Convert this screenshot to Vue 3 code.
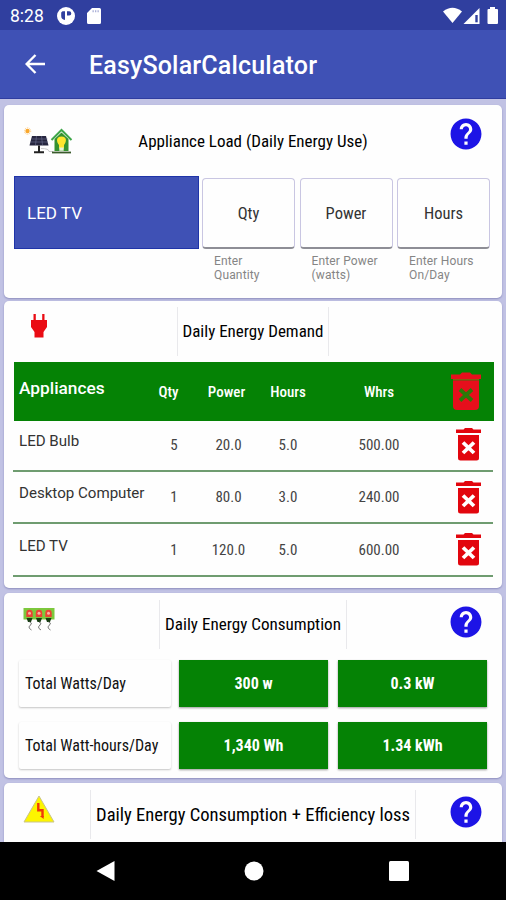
<script setup>
import { ref } from 'vue'

const fields = ref([
  { id: 'qty', label: 'Qty', hint: 'Enter Quantity' },
  { id: 'power', label: 'Power', hint: 'Enter Power (watts)' },
  { id: 'hours', label: 'Hours', hint: 'Enter Hours On/Day' }
])

const appliances = ref([
  { id: 1, name: 'LED Bulb', qty: 5, power: 20, hours: 5 },
  { id: 2, name: 'Desktop Computer', qty: 1, power: 80, hours: 3 },
  { id: 3, name: 'LED TV', qty: 1, power: 120, hours: 5 }
])

const totals = ref([
  { label: 'Total Watts/Day', small: '300 w', big: '0.3 kW' },
  { label: 'Total Watt-hours/Day', small: '1,340 Wh', big: '1.34 kWh' }
])

const removeAppliance = (id) => {
  appliances.value = appliances.value.filter((a) => a.id !== id)
}
</script>

<template>
  <div class="phone">
    <div class="status">
      <span class="clock">8:28</span>
      <svg class="st-p" width="18" height="18" viewBox="0 0 18 18">
        <circle cx="9" cy="9" r="9" fill="#fff" />
        <path d="M5.500 4.300h2.500v8.600A4 4 0 0 1 4.200 9V5.500z M10 4.300h2.200a2 2 0 0 1 0 4.200H10z" fill="#303f9f" />
      </svg>
      <svg class="st-sd" width="14" height="16" viewBox="0 0 14 16">
        <path d="M5 0h7.500A1.500 1.500 0 0 1 14 1.500v13a1.500 1.500 0 0 1-1.500 1.500h-11A1.500 1.500 0 0 1 0 14.500V5z" fill="#fff" />
        <path d="M5.500 2.300h1.300v2H5.500zM8 2.300h1.300v2H8zM10.500 2.300h1.300v2h-1.300z" fill="#aab0d8" />
      </svg>
      <svg class="st-right" width="56" height="18" viewBox="0 0 56 18">
        <path d="M0 4.500Q9.500-3 19 4.500L9.500 16z" fill="#fff" />
        <path d="M36.500 1v16H20.500z" fill="#fff" />
        <path d="M32.300 8h2.400v7.300h-2.400z" fill="#303f9f" />
        <path d="M47 0h5v2h2a1 1 0 0 1 1 1v13a1 1 0 0 1-1 1h-8.500a1 1 0 0 1-1-1V3a1 1 0 0 1 1-1H47z" fill="#fff" />
      </svg>
    </div>

    <header>
      <svg width="20" height="20" viewBox="0 0 20 20" fill="none" stroke="#fff" stroke-width="2.400">
        <path d="M20 10H2M10.500 1L1.600 10l8.900 9" />
      </svg>
      <h1>EasySolarCalculator</h1>
    </header>

    <main>
      <section class="card load">
        <div class="card-head">
          <svg class="icon-solar" width="50" height="28" viewBox="0 0 50 28">
            <circle cx="3.500" cy="4" r="2.200" fill="#f9a72b" />
            <circle cx="3.500" cy="4" r="3.200" fill="none" stroke="#fbc77a" stroke-width="1" stroke-dasharray="1 1" />
            <path d="M8 9h14l2.500 9.500H5.500z" fill="#26263f" />
            <path d="M7.500 12h16M6.700 15h17M12.500 9l-1 9M17.500 9l1 9" stroke="#6c6e92" stroke-width=".6" />
            <path d="M15 18.500V25M10 25.200h10" stroke="#222" stroke-width="2" />
            <path d="M17 21.500q8 0 8 3h4" fill="none" stroke="#bbb" stroke-width=".8" />
            <path d="M30.500 12L37.500 5.500 44.500 12V24h-14z" fill="#35922f" />
            <path d="M27.500 13L37.500 3l10 10" fill="none" stroke="#3da648" stroke-width="2" />
            <path d="M28 25.500h19" stroke="#3a5a2c" stroke-width="1.800" />
            <path d="M37.500 9.500c6 0 5 5.500 2.500 8.500v3.500h-5V18c-2.500-3-3.500-8.500 2.500-8.500z" fill="#ffe52e" />
            <path d="M35.300 20.500h4.400v3.300h-4.400z" fill="#e8f2d8" />
          </svg>
          <h2>Appliance Load (Daily Energy Use)</h2>
          <svg class="help" width="32" height="32" viewBox="0 0 24 24">
            <path fill="#1d14e6" d="M12 .4C5.600.4.400 5.600.400 12S5.600 23.600 12 23.600 23.600 18.400 23.600 12 18.400.400 12 .400zm1.200 19.700h-2.400v-2.400h2.400zm2.400-9l-1.100 1.100c-.9.900-1.300 1.600-1.300 3.300h-2.400v-.6c0-1.300.500-2.400 1.400-3.300l1.400-1.500c.5-.4.700-1 .7-1.600 0-1.300-1-2.300-2.300-2.300s-2.400 1-2.400 2.300H7.300c0-2.600 2.100-4.700 4.700-4.700s4.700 2.100 4.700 4.700c0 1-.4 2-1.100 2.600z" />
          </svg>
        </div>
        <div class="inputs">
          <div class="select">LED TV</div>
          <div v-for="f in fields" :key="f.id" class="field">
            <div class="box">{{ f.label }}</div>
            <p>{{ f.hint }}</p>
          </div>
        </div>
      </section>

      <section class="card demand">
        <div class="card-head">
          <svg class="icon-plug" width="16" height="24" viewBox="0 0 16 24">
            <path d="M2.500 0h2.300v6h6.400V0h2.300v6H16v7l-3.500 5v5.500h-9V18L0 13V6h2.500z" fill="#ea0c14" />
          </svg>
          <h2 class="boxed">Daily Energy Demand</h2>
        </div>
        <div class="row thead">
          <span class="name">Appliances</span>
          <span>Qty</span>
          <span>Power</span>
          <span>Hours</span>
          <span>Whrs</span>
          <svg width="30" height="38" viewBox="0 0 30 38">
            <path d="M0 2.500h9L11 .5h8l2 2h9V7H0z" fill="#e60f1c" />
            <path d="M2 7h26v1.500H2z" fill="#8b5a10" />
            <path d="M2 8.500h26V34a4 4 0 0 1-4 4H6a4 4 0 0 1-4-4z" fill="#e60f1c" />
            <path d="M9 17.500l12 11M21 17.500L9 28.500" stroke="#2b7a08" stroke-width="3.800" />
          </svg>
        </div>
        <div v-for="a in appliances" :key="a.id" class="row">
          <span class="name">{{ a.name }}</span>
          <span class="qty">{{ a.qty }}</span>
          <span class="power">{{ a.power.toFixed(1) }}</span>
          <span>{{ a.hours.toFixed(1) }}</span>
          <span>{{ (a.qty * a.power * a.hours).toFixed(2) }}</span>
          <svg width="25" height="33" viewBox="0 0 25 33" @click="removeAppliance(a.id)">
            <path d="M0 1.500h7.500L9 0h7l1.500 1.500H25V5H0z" fill="#e2060e" />
            <path d="M2 7h21v23a2.500 2.500 0 0 1-2.500 2.500h-16A2.500 2.500 0 0 1 2 30z" fill="#e2060e" />
            <path d="M7 14.500l11 10.500M18 14.500L7 25" stroke="#fff" stroke-width="3.800" />
          </svg>
        </div>
      </section>

      <section class="card consumption">
        <div class="card-head">
          <svg class="icon-meter" width="32" height="24" viewBox="0 0 32 24">
            <path d="M.5 0h31v11.500H.500z" fill="#7cc83c" />
            <g v-for="x in [6.500, 16, 25.500]" :key="x" :transform="`translate(${x} 0)`">
              <path d="M-3.200 9V5a3.200 3.200 0 0 1 6.400 0v4z" fill="#ea4335" />
              <circle cx="0" cy="5.200" r="1.500" fill="#f9b5a0" />
              <path d="M-3 10h6l-1.500 4h-3z" fill="#173d12" />
              <path d="M0 14q3.500 1 1 3t-1 3.500l2 1.500" fill="none" stroke="#777" stroke-width="1" />
            </g>
          </svg>
          <h2 class="boxed">Daily Energy Consumption</h2>
          <svg class="help" width="32" height="32" viewBox="0 0 24 24">
            <path fill="#1d14e6" d="M12 .4C5.600.4.400 5.600.400 12S5.600 23.600 12 23.600 23.600 18.400 23.600 12 18.400.400 12 .400zm1.200 19.700h-2.400v-2.400h2.400zm2.400-9l-1.100 1.100c-.9.900-1.300 1.600-1.300 3.300h-2.400v-.6c0-1.300.500-2.400 1.400-3.300l1.400-1.500c.5-.4.700-1 .7-1.600 0-1.300-1-2.300-2.300-2.300s-2.400 1-2.400 2.300H7.300c0-2.600 2.100-4.700 4.700-4.700s4.700 2.100 4.700 4.700c0 1-.4 2-1.100 2.600z" />
          </svg>
        </div>
        <div v-for="t in totals" :key="t.label" class="total">
          <div class="total-label">{{ t.label }}</div>
          <div class="total-value">{{ t.small }}</div>
          <div class="total-value">{{ t.big }}</div>
        </div>
      </section>

      <section class="card loss">
        <div class="card-head">
          <svg class="icon-warn" width="32" height="28" viewBox="0 0 32 28">
            <path d="M16 1L31 27H1z" fill="#fdf500" stroke="#c9c48a" stroke-width="1" />
            <path d="M15.300 8v7.300h4.200V22" fill="none" stroke="#f0370a" stroke-width="2.400" />
            <path d="M16.800 21h3.900v3z" fill="#f0370a" />
          </svg>
          <h2 class="boxed">Daily Energy Consumption + Efficiency loss</h2>
          <svg class="help" width="32" height="32" viewBox="0 0 24 24">
            <path fill="#1d14e6" d="M12 .4C5.600.4.400 5.600.400 12S5.600 23.600 12 23.600 23.600 18.400 23.600 12 18.400.400 12 .400zm1.200 19.700h-2.400v-2.400h2.400zm2.400-9l-1.100 1.100c-.9.900-1.300 1.600-1.300 3.300h-2.400v-.6c0-1.300.500-2.400 1.400-3.300l1.400-1.500c.5-.4.700-1 .7-1.600 0-1.300-1-2.300-2.300-2.300s-2.400 1-2.400 2.300H7.300c0-2.600 2.100-4.700 4.700-4.700s4.700 2.100 4.700 4.700c0 1-.4 2-1.100 2.600z" />
          </svg>
        </div>
      </section>
    </main>

    <nav>
      <svg width="19" height="22" viewBox="0 0 19 22"><path d="M18.500 1v20L.500 11z" fill="#fff" /></svg>
      <svg class="home" width="20" height="20" viewBox="0 0 20 20"><circle cx="10" cy="10" r="9.500" fill="#fff" /></svg>
      <svg width="20" height="20" viewBox="0 0 20 20"><rect width="20" height="20" rx="1.500" fill="#fff" /></svg>
    </nav>
  </div>
</template>

<style>
body {
  margin: 0;
}
</style>

<style scoped>
.phone {
  width: 506px;
  height: 900px;
  overflow: hidden;
  display: flex;
  flex-direction: column;
  background: #c1c2e4;
  font-family: Roboto, "Liberation Sans", sans-serif;
  color: #111;
}
svg {
  display: block;
  flex: none;
}
h1, h2, p {
  margin: 0;
}
.status {
  height: 30px;
  flex: none;
  box-sizing: border-box;
  background: #303f9f;
  display: flex;
  align-items: center;
  padding: 1px 7px 0 10px;
}
.clock {
  color: #fff;
  font-size: 17.5px;
  width: 47px;
}
.st-sd {
  margin-left: 12px;
}
.st-right {
  margin-left: auto;
}
header {
  height: 69px;
  flex: none;
  box-sizing: border-box;
  background: #3f51b5;
  border-bottom: 1px solid #2f3da0;
  display: flex;
  align-items: center;
  padding-left: 25px;
}
h1 {
  margin: 2px 0 0 44px;
  font-size: 25px;
  font-weight: 500;
  letter-spacing: 0.18px;
  color: #fff;
}
main {
  flex: 1;
  min-height: 0;
  overflow: hidden;
  padding: 6px 4px 0;
}
.card {
  box-sizing: border-box;
  background: #fefefe;
  border-radius: 5px;
  box-shadow: 0 1px 2px #8d8dbd;
}
.card-head {
  display: grid;
  grid-template-columns: 86px 1fr 86px;
  align-items: start;
}
h2 {
  grid-column: 2;
  justify-self: center;
  font-size: 17px;
  font-weight: 400;
  font-stretch: 75%;
  white-space: nowrap;
  color: #000;
}
.boxed {
  box-sizing: border-box;
  height: 49px;
  line-height: 48px;
  padding: 0 5px;
  border: 1px solid #e9e9ec;
  border-width: 0 1px;
}
.help {
  margin: 13px 0 0 33.500px;
}
.load {
  height: 193px;
  margin-bottom: 3px;
}
.load .card-head {
  height: 71px;
}
.load h2 {
  margin-top: 26px;
  line-height: 20px;
}
.icon-solar {
  margin: 22px 0 0 20px;
}
.inputs {
  display: flex;
  padding-left: 10px;
}
.select {
  box-sizing: border-box;
  width: 185px;
  height: 73px;
  margin-right: 3px;
  padding-left: 12px;
  line-height: 72px;
  border: 1px solid #1f34a8;
  background: #3f51b5;
  color: #fff;
  font-size: 17px;
}
.field {
  width: 93px;
  margin: 2px 4.500px 0 0;
}
.box {
  box-sizing: border-box;
  height: 71px;
  line-height: 70px;
  text-align: center;
  font-size: 16.500px;
  font-stretch: 75%;
  color: #333;
  border: 1px solid #c9c6e2;
  border-bottom: 2px solid #8e8e96;
  border-radius: 4px;
}
.field p {
  margin: 5px 0 0 12px;
  width: 72px;
  font-size: 12px;
  line-height: 14px;
  letter-spacing: 0.15px;
  color: #858585;
}
.demand {
  height: 287px;
  margin-bottom: 5px;
}
.demand .card-head {
  height: 61px;
}
.icon-plug {
  margin: 13px 0 0 27px;
}
.demand .boxed {
  margin-top: 6px;
}
.row {
  display: grid;
  grid-template-columns: 138px 33px 83px 40px 142px 44px;
  align-items: center;
  justify-items: center;
  box-sizing: border-box;
  height: 52.500px;
  margin: 0 9px;
  padding-left: 1px;
  border-bottom: 2px solid #6f9c70;
  font-size: 15px;
  font-stretch: 75%;
  color: #444;
}
.row svg {
  margin-left: -7px;
}
.name {
  justify-self: start;
  padding: 0 0 8px 5px;
  font-size: 15.100px;
  font-stretch: 100%;
  white-space: nowrap;
  color: #333;
}
.qty {
  padding-left: 11px;
}
.power {
  padding-left: 4px;
}
.thead {
  height: 59px;
  margin: 0 8.500px -2px 10px;
  padding-left: 0;
  border: 0;
  background: #058205;
  color: #fff;
  font-weight: 500;
}
.thead svg {
  margin: -1px 0 0 -13px;
}
.thead .name {
  font-size: 17.300px;
  color: #fff;
}
.row:not(.thead) > * {
  margin-top: 1px;
}
.consumption {
  height: 185px;
  margin-bottom: 5px;
}
.consumption .card-head {
  height: 67px;
}
.icon-meter {
  margin: 15px 0 0 19px;
}
.consumption .boxed,
.loss .boxed {
  margin-top: 7px;
}
.consumption h2 {
  font-weight: 450;
  font-size: 17.100px;
}
.total {
  display: flex;
  height: 47px;
  padding-left: 15px;
  margin-bottom: 15px;
}
.total-label {
  box-sizing: border-box;
  width: 152px;
  padding-left: 6px;
  line-height: 47px;
  margin-right: 8px;
  font-size: 16px;
  font-stretch: 75%;
  border-radius: 2px;
  box-shadow: 0 1px 2px #c4c4c4;
}
.total-value {
  width: 149px;
  margin-right: 10px;
  line-height: 47px;
  text-align: center;
  background: #058205;
  color: #fff;
  font-size: 16px;
  font-weight: 700;
  font-stretch: 75%;
  box-shadow: 0 1px 2px #999;
}
.loss {
  height: 90px;
}
.icon-warn {
  margin: 12px 0 0 19px;
}
.loss h2 {
  font-size: 18.600px;
  line-height: 50px;
}
nav {
  height: 58px;
  flex: none;
  background: #000;
  display: flex;
  align-items: center;
  justify-content: space-between;
  padding: 0 97px 0 96px;
}
.home {
  margin-left: 3px;
}
</style>
